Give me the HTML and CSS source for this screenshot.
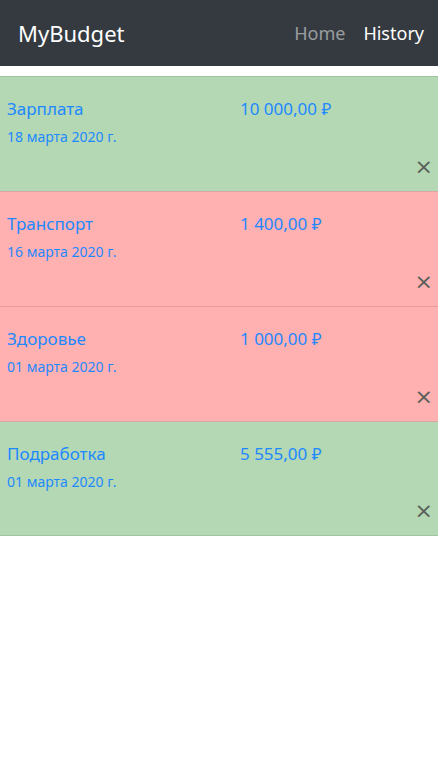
FILE: index.html
```html
<!DOCTYPE html>
<html lang="ru">
<head>
<meta charset="utf-8">
<link rel="stylesheet" href="styles.css">
</head>
<body>
<nav class="navbar">
  <span class="brand">MyBudget</span>
  <div class="nav-links">
    <span class="nav-link">Home</span>
    <span class="nav-link active">History</span>
  </div>
</nav>
<ul class="list">
  <li class="item income">
    <div class="info">
      <div class="title">Зарплата</div>
      <div class="date">18 марта 2020 г.</div>
    </div>
    <div class="amount">10 000,00 ₽</div>
    <button class="close">×</button>
  </li>
  <li class="item expense">
    <div class="info">
      <div class="title">Транспорт</div>
      <div class="date">16 марта 2020 г.</div>
    </div>
    <div class="amount">1 400,00 ₽</div>
    <button class="close">×</button>
  </li>
  <li class="item expense">
    <div class="info">
      <div class="title">Здоровье</div>
      <div class="date">01 марта 2020 г.</div>
    </div>
    <div class="amount">1 000,00 ₽</div>
    <button class="close">×</button>
  </li>
  <li class="item income">
    <div class="info">
      <div class="title">Подработка</div>
      <div class="date">01 марта 2020 г.</div>
    </div>
    <div class="amount">5 555,00 ₽</div>
    <button class="close">×</button>
  </li>
</ul>
</body>
</html>
```
FILE: styles.css
```css
* { box-sizing: border-box; }
body {
  margin: 0;
  font-family: "Noto Sans", "Open Sans", sans-serif;
  background: #fff;
}
.navbar {
  height: 66px;
  background: #343a40;
  display: flex;
  align-items: center;
  justify-content: space-between;
  padding: 0 14px 0 18px;
}
.brand {
  color: #fff;
  font-size: 22px;
}
.nav-links {
  display: flex;
  gap: 18px;
}
.nav-link {
  color: rgba(255,255,255,.5);
  font-size: 18px;
}
.nav-link.active { color: #fff; }
.list {
  list-style: none;
  margin: 10px 0 0;
  padding: 0;
}
.item {
  position: relative;
  display: flex;
  height: 115px;
  padding: 17px 7px 0;
  border-top: 1px solid;
}
.income { background: #b3d8b3; border-color: #9fc59f; }
.expense { background: #ffb0b0; border-color: #e49c9c; }
.item:last-child { border-bottom: 1px solid #9fc59f; }
.item.income + .item.expense, .item.expense + .item.income { border-top-color: #d9a5a5; }
.info { width: 233px; color: #1e88ff; }
.title { font-size: 17px; line-height: 30px; }
.date { font-size: 14px; line-height: 26px; }
.amount { color: #1e88ff; font-size: 17px; line-height: 30px; }
.close {
  position: absolute;
  right: 5px;
  bottom: 13px;
  border: 0;
  background: none;
  padding: 0;
  color: #5a5f5a;
  font-size: 22px;
  line-height: 22px;
  font-family: "DejaVu Sans", sans-serif;
}
```
